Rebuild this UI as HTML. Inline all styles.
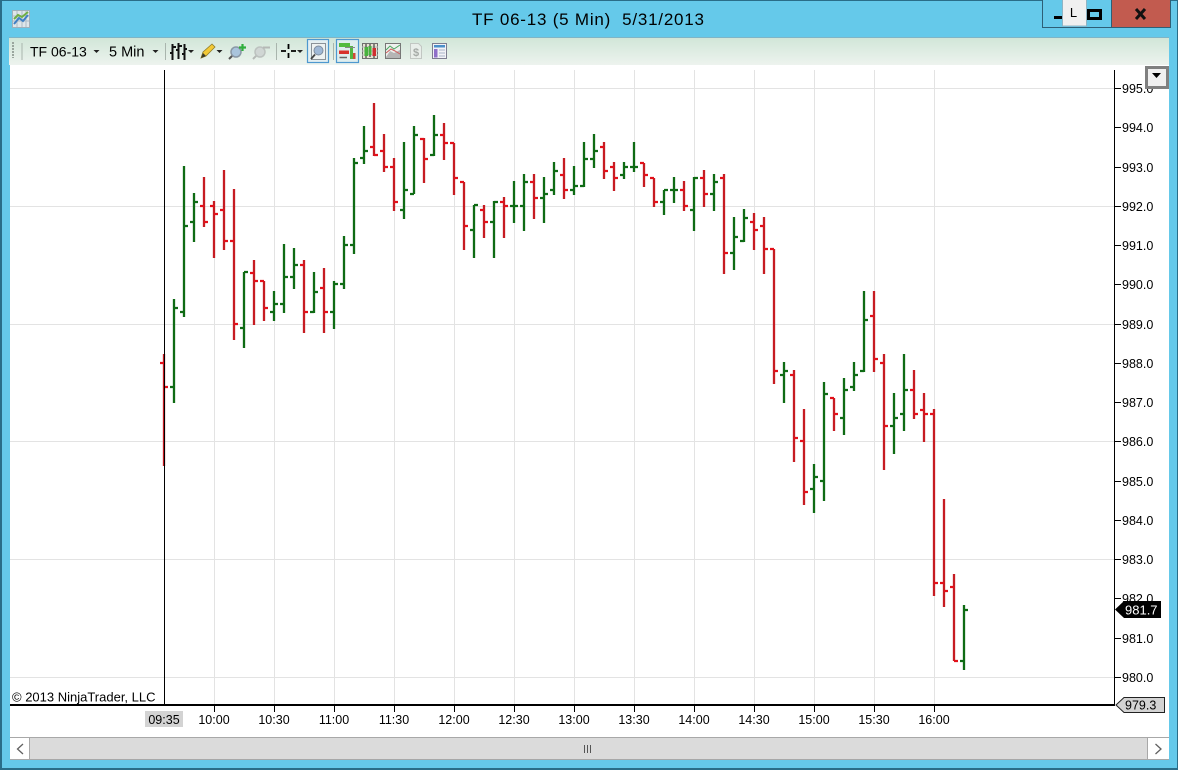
<!DOCTYPE html>
<html><head><meta charset="utf-8"><title>TF 06-13 (5 Min) 5/31/2013</title>
<style>html,body{margin:0;padding:0;background:#65c9ea;overflow:hidden}svg{display:block}text{font-family:"Liberation Sans",Arial,sans-serif;fill:#000}</style></head>
<body>
<svg width="1178" height="770" viewBox="0 0 1178 770" xmlns="http://www.w3.org/2000/svg">
<defs><linearGradient id="tb" x1="0" y1="0" x2="0" y2="1"><stop offset="0" stop-color="#d1e6d8"/><stop offset="1" stop-color="#edf3ee"/></linearGradient></defs>
<rect width="1178" height="770" fill="#65c9ea"/>
<rect x="0.5" y="0.5" width="1177" height="769" fill="none" stroke="#2a6d88"/>
<rect x="0" y="768" width="1178" height="2" fill="#2a6d88"/>
<rect x="0" y="0" width="2" height="770" fill="#2a6d88"/>

<rect x="12.5" y="10.5" width="17" height="17" fill="#dfe6ea" stroke="#9fb0bb"/>
<path d="M13 16H29M13 21H29M17 11V27M22 11V27M26 11V27" stroke="#aebbc6" fill="none"/>
<path d="M14 24L19 18L23 21L28 15" stroke="#3f7fc4" stroke-width="2" fill="none"/>
<path d="M14 19L18 15L22 17L28 12" stroke="#6fae45" stroke-width="2" fill="none"/>
<text x="472" y="25" font-size="17" textLength="232" lengthAdjust="spacing" xml:space="preserve" fill="#111">TF 06-13 (5 Min)  5/31/2013</text>

<rect x="1042.5" y="-1" width="128" height="28.5" fill="#65c9ea" stroke="#2e5f76"/>
<rect x="1111" y="0" width="59" height="27" fill="#c25b4f"/>
<path d="M1111.5 0V27" stroke="#2e5f76"/>
<rect x="1054" y="16" width="8" height="3" fill="#000"/>
<rect x="1062" y="0" width="25" height="26" fill="#f0f0f0"/>
<path d="M1062.5 0V26H1086.5V0" fill="none" stroke="#8fb4c4"/>
<text x="1073.5" y="17" text-anchor="middle" font-size="13" fill="#222">L</text>
<rect x="1088.5" y="10.5" width="12" height="8" fill="none" stroke="#000" stroke-width="3"/>
<path d="M1136 9L1145 19M1145 9L1136 19" stroke="#111" stroke-width="3" fill="none"/>

<rect x="9" y="38" width="1160" height="27" fill="url(#tb)"/>
<path d="M9 37.5H1169" stroke="#7fb5c6"/>
<path d="M13 42V58" stroke="#9aa69e" stroke-width="2" stroke-dasharray="2 1" fill="none"/>
<path d="M22 43V60M165.5 43V60M276.5 43V60M333.5 43V60" stroke="#a9b5ad"/>
<text x="30" y="56.5" font-size="14" fill="#111">TF 06-13</text>
<path d="M93.5 50H99.5L96.5 53Z" fill="#222"/>
<text x="109" y="56.5" font-size="14.5" fill="#111">5 Min</text>
<path d="M152.5 50H158.5L155.5 53Z" fill="#222"/>

<path d="M172.5 44V60M178.5 43V59M184.5 44V60" stroke="#111" stroke-width="2" fill="none"/>
<path d="M170 53H172M173 47H176M176 50H178M179 46H182M182 54H184M185 49H187" stroke="#111" stroke-width="2" fill="none"/>
<path d="M188 50H194L191 53Z" fill="#222"/>
<path d="M201 58L203 52L212 44L215 47L206 56Z" fill="#f3c936" stroke="#8f7d2a" stroke-width=".8"/>
<path d="M201 58L203 53L206 56Z" fill="#3a3a2a"/>
<path d="M216.5 50H222.5L219.5 53Z" fill="#222"/>
<circle cx="236" cy="52" r="5" fill="#a9c4dc" stroke="#8a98a6" stroke-width="1.5"/>
<path d="M232 56L229 59" stroke="#555" stroke-width="2"/>
<path d="M239 47.5H246M242.5 44V51" stroke="#2fae3c" stroke-width="2.2" fill="none"/>
<circle cx="260" cy="52" r="5" fill="#d0d6d4" stroke="#bcc2bf" stroke-width="1.5"/>
<path d="M256 56L253 59" stroke="#b5b9b6" stroke-width="2"/>
<path d="M263 47.5H270" stroke="#b5b9b6" stroke-width="2"/>
<path d="M281 51H286M291 51H296M288.5 44V49M288.5 53V58" stroke="#000" stroke-width="1.8" fill="none"/>
<path d="M297 50H303L300 53Z" fill="#222"/>
<rect x="307.5" y="39.5" width="21" height="23" fill="#e4eff2" stroke="#4d98cf" stroke-width="1.2"/>
<rect x="311.5" y="43.5" width="14" height="16" fill="#eef2f2" stroke="#8b9298"/>
<circle cx="318.5" cy="50.5" r="4.5" fill="#9fb8d6" stroke="#7f8d9e"/>
<path d="M315 54.5L311 59" stroke="#444" stroke-width="1.8"/>
<rect x="336.5" y="39.5" width="22" height="23" fill="#dfeeee" stroke="#4d98cf" stroke-width="1.2"/>
<rect x="339" y="43" width="11" height="4" fill="#54bb3f"/>
<rect x="339" y="50.5" width="10" height="3.5" fill="#d8322c"/>
<path d="M339.5 57.5H347" stroke="#666" stroke-width="1.5"/>
<rect x="350" y="46" width="3" height="13" fill="#53b63f"/>
<rect x="353" y="53" width="2.5" height="6" fill="#d14a36"/>
<path d="M345 47.5H355" stroke="#888"/>
<rect x="362.5" y="43.5" width="15" height="15" fill="#e7e4d4" stroke="#6f6f6f"/>
<path d="M362 47H378M362 51H378M362 55H378" stroke="#bbb"/>
<path d="M366 44V58M370 44V57M374 44V58" stroke="#222" fill="none"/>
<rect x="364.5" y="47" width="3.5" height="9" fill="#49b23e"/>
<rect x="368.5" y="46" width="3" height="9" fill="#49b23e"/>
<rect x="372.5" y="48" width="3.5" height="8" fill="#cf2f2f"/>
<rect x="385.5" y="43.5" width="15" height="15" fill="#eef0ee" stroke="#777"/>
<path d="M386 57L390 51L394 53L400 50V58H386Z" fill="#b5b5b5"/>
<path d="M386 50L390 46L394 49L400 45" stroke="#4aa860" fill="none"/>
<path d="M386 53L391 49L395 51L400 54" stroke="#cf5c5c" fill="none"/>
<path d="M410.5 43.5H418.5L421.5 46.5V58.5H410.5Z" fill="#e9eeea" stroke="#c2c7c3"/>
<text x="416" y="56" text-anchor="middle" font-size="11" font-weight="bold" style="fill:#a5aaa6">$</text>
<rect x="432.5" y="43.5" width="14" height="15" fill="#f2f2f6" stroke="#7d7d90"/>
<rect x="434" y="45" width="11" height="2.5" fill="#4b8fc9"/>
<rect x="434" y="49" width="3.5" height="8.5" fill="#8f6fc9"/>
<path d="M439 50H445M439 53H445M439 56H445" stroke="#a8b4c8"/>

<rect x="10" y="65" width="1159" height="672" fill="#fff"/>
<path d="M214.5 70V704M274.5 70V704M334.5 70V704M394.5 70V704M454.5 70V704M514.5 70V704M574.5 70V704M634.5 70V704M694.5 70V704M754.5 70V704M814.5 70V704M874.5 70V704M934.5 70V704" stroke="#e3e3e3" fill="none"/>
<path d="M10 88.5H1114M10 206.5H1114M10 324.5H1114M10 441.5H1114M10 559.5H1114M10 677.5H1114" stroke="#e3e3e3" fill="none"/>

<path stroke="#0f6b14" stroke-width="2.3" fill="none" d="M174 299V403M170 387H174M174 308H178M184 166V317M180 312H184M184 226H188M194 193V242M190 222H194M194 202H198M244 272V348M240 328H244M244 272H248M274 291V321M270 312H274M274 304H278M284 244V313M280 304H284M284 277H288M294 248V289M290 277H294M294 265H298M314 272V313M310 312H314M314 292H318M334 281V329M330 312H334M334 284H338M344 236V289M340 284H344M344 245H348M354 158V254M350 245H354M354 163H358M364 126V164M360 158H364M364 151H368M404 142V219M400 210H404M404 190H408M414 126V194M410 194H414M414 135H418M434 115V156M430 155H434M434 135H438M474 205V258M470 230H474M474 205H478M494 201V258M490 222H494M494 202H498M514 181V223M510 206H514M514 206H518M524 174V231M520 206H524M524 182H528M544 177V223M540 198H544M544 194H548M554 162V195M550 190H554M554 171H558M574 166V195M570 190H574M574 186H578M584 142V187M580 186H584M584 159H588M594 134V168M590 159H594M594 151H598M624 162V179M620 175H624M624 167H628M634 142V172M630 167H634M634 167H638M664 190V215M660 202H664M664 190H668M674 177V203M670 190H674M674 190H678M694 177V231M690 210H694M694 178H698M714 174V211M710 194H714M714 182H718M734 217V270M730 253H734M734 237H738M744 209V242M740 241H744M744 218H748M784 362V403M780 375H784M784 371H788M814 464V513M810 489H814M814 477H818M824 382V501M820 481H824M824 394H828M844 378V435M840 418H844M844 390H848M854 362V391M850 387H854M854 375H858M864 291V372M860 371H864M864 320H868M894 393V454M890 426H894M894 418H898M904 354V431M900 414H904M904 390H908M964 605V670M960 661H964M964 610H968"/>
<path stroke="#c61c22" stroke-width="2.3" fill="none" d="M164 354V466M204 177V227M214 201V258M224 170V250M234 189V340M254 260V325M264 281V321M304 260V333M324 268V333M374 103V156M384 134V172M394 158V211M424 138V183M444 123V160M454 143V195M464 182V250M484 205V238M504 197V238M534 174V219M564 158V199M604 142V179M614 162V191M644 163V187M654 178V207M684 181V211M704 170V207M724 174V274M754 213V250M764 217V274M774 249V384M794 370V462M804 409V505M834 398V431M874 291V372M884 354V470M914 370V419M924 393V442M934 409V596M944 499V607M954 574V661"/>
<path stroke="#e3101a" stroke-width="2.3" fill="none" d="M160 363H164M164 387H168M200 206H204M204 222H208M210 206H214M214 214H218M220 210H224M224 241H228M230 241H234M234 324H238M250 273H254M254 281H258M260 281H264M264 308H268M300 265H304M304 312H308M320 288H324M324 312H328M370 147H374M374 155H378M380 151H384M384 167H388M390 167H394M394 202H398M420 139H424M424 159H428M440 135H444M444 143H448M450 143H454M454 178H458M460 182H464M464 226H468M480 210H484M484 222H488M500 202H504M504 206H508M530 182H534M534 198H538M560 175H564M564 190H568M600 147H604M604 171H608M610 167H614M614 178H618M640 163H644M644 175H648M650 178H654M654 202H658M680 190H684M684 206H688M700 178H704M704 194H708M720 178H724M724 253H728M750 222H754M754 230H758M760 226H764M764 249H768M770 249H774M774 371H778M790 375H794M794 438H798M800 441H804M804 492H808M830 398H834M834 414H838M870 316H874M874 359H878M880 363H884M884 426H888M910 390H914M914 414H918M920 410H924M924 414H928M930 414H934M934 583H938M940 583H944M944 591H948M950 587H954M954 661H958"/>

<path d="M164.5 70V704" stroke="#000"/>
<path d="M1114.5 70V705" stroke="#000"/>
<rect x="10" y="704" width="1105" height="2" fill="#000"/>
<path d="M214.5 706V712M274.5 706V712M334.5 706V712M394.5 706V712M454.5 706V712M514.5 706V712M574.5 706V712M634.5 706V712M694.5 706V712M754.5 706V712M814.5 706V712M874.5 706V712M934.5 706V712" stroke="#000"/>
<path d="M1115 88.5H1121M1115 127.5H1121M1115 167.5H1121M1115 206.5H1121M1115 245.5H1121M1115 284.5H1121M1115 324.5H1121M1115 363.5H1121M1115 402.5H1121M1115 441.5H1121M1115 481.5H1121M1115 520.5H1121M1115 559.5H1121M1115 598.5H1121M1115 638.5H1121M1115 677.5H1121" stroke="#000"/>

<g font-size="12.5">
<text x="1122" y="93">995.0</text><text x="1122" y="132">994.0</text><text x="1122" y="172">993.0</text><text x="1122" y="211">992.0</text>
<text x="1122" y="250">991.0</text><text x="1122" y="289">990.0</text><text x="1122" y="329">989.0</text><text x="1122" y="368">988.0</text>
<text x="1122" y="407">987.0</text><text x="1122" y="446">986.0</text><text x="1122" y="486">985.0</text><text x="1122" y="525">984.0</text>
<text x="1122" y="564">983.0</text><text x="1122" y="603">982.0</text><text x="1122" y="643">981.0</text><text x="1122" y="682">980.0</text>
</g>
<rect x="145" y="711" width="38" height="16" fill="#d3d3d3"/>
<g font-size="12.5" text-anchor="middle">
<text x="164" y="724">09:35</text><text x="214" y="724">10:00</text><text x="274" y="724">10:30</text><text x="334" y="724">11:00</text>
<text x="394" y="724">11:30</text><text x="454" y="724">12:00</text><text x="514" y="724">12:30</text><text x="574" y="724">13:00</text>
<text x="634" y="724">13:30</text><text x="694" y="724">14:00</text><text x="754" y="724">14:30</text><text x="814" y="724">15:00</text>
<text x="874" y="724">15:30</text><text x="934" y="724">16:00</text>
</g>
<text x="12" y="701.5" font-size="13">© 2013 NinjaTrader, LLC</text>

<path d="M1115 609.5L1124 601H1161V618H1124Z" fill="#000"/>
<text x="1125" y="614.5" font-size="13" style="fill:#fff">981.7</text>
<path d="M1116 705L1124 697.5H1164.5V712.5H1124Z" fill="#d3d3d3" stroke="#222"/>
<text x="1125" y="709.5" font-size="12.5">979.3</text>

<rect x="1146.5" y="67.5" width="21" height="20" fill="#f0f0f0" stroke="#808080" stroke-width="3"/>
<path d="M1152 73H1161L1156.5 78Z" fill="#000"/>

<rect x="10" y="737" width="1159" height="23" fill="#dbdbdb"/>
<path d="M10 737.5H1169M10 759.5H1169" stroke="#a8a8a8"/>
<rect x="10" y="738" width="19" height="21" fill="#fff"/>
<path d="M29.5 738V759" stroke="#a8a8a8"/>
<rect x="1148" y="738" width="21" height="21" fill="#fff"/>
<path d="M1147.5 738V759" stroke="#a8a8a8"/>
<path d="M23 744L17.5 749L23 754" fill="none" stroke="#606060" stroke-width="1.3"/>
<path d="M1155.5 744L1161 749L1155.5 754" fill="none" stroke="#606060" stroke-width="1.3"/>
<path d="M584.5 745V753M587.5 745V753M590.5 745V753" stroke="#555"/>
</svg>
</body></html>
